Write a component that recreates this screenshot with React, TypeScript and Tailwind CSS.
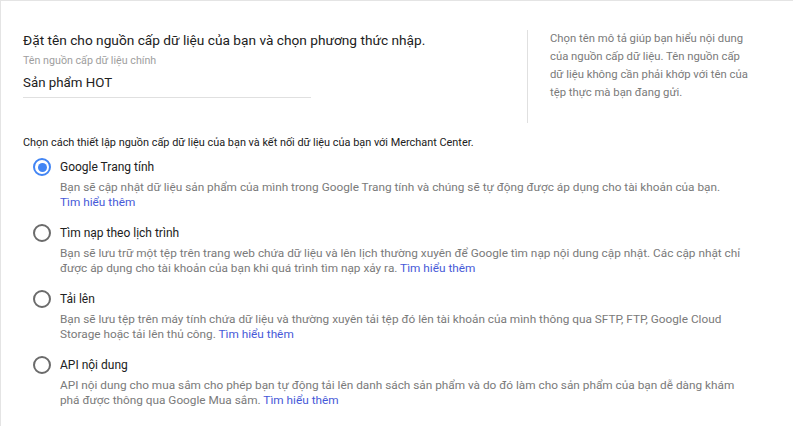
import React from "react";

const Radio = ({ checked }: { checked?: boolean }) => (
  <div
    className={
      "w-[18px] h-[18px] rounded-full border-2 flex items-center justify-center shrink-0 " +
      (checked ? "border-[#4285f4]" : "border-[#6b6b6b]")
    }
  >
    {checked && <div className="w-[9px] h-[9px] rounded-full bg-[#4285f4]" />}
  </div>
);

const Link = () => <span className="text-[#4659d8]">Tìm hiểu thêm</span>;

const Option = ({
  checked,
  title,
  children,
}: {
  checked?: boolean;
  title: string;
  children: React.ReactNode;
}) => (
  <div className="flex flex-col mb-[13px]">
    <div className="flex items-center h-[20px] gap-[9px] pl-[32px]">
      <Radio checked={checked} />
      <span className="text-[12px] text-[#212121] leading-[20px]">{title}</span>
    </div>
    <div className="mt-[3px] ml-[59px] w-[692px] text-[11.8px] leading-[15px] text-[#7a7a7a]">
      {children}
    </div>
  </div>
);

export default function App() {
  return (
    <div
      className="w-[793px] h-[426px] bg-white border-t border-l border-[#e4e4e4] overflow-hidden"
      style={{ fontFamily: "Roboto, 'Noto Sans', sans-serif" }}
    >
      <div className="flex pt-[29px] pl-[22px]">
        <div className="w-[504px] shrink-0">
          <div className="text-[13.7px] leading-[20px] text-[#212121]">
            Đặt tên cho nguồn cấp dữ liệu của bạn và chọn phương thức nhập.
          </div>
          <div className="mt-[4px] text-[10.7px] leading-[14px] text-[#9e9e9e]">
            Tên nguồn cấp dữ liệu chính
          </div>
          <div className="mt-[5px] w-[288px] border-b border-[#e0e0e0] pb-[4px] text-[13.3px] leading-[20px] text-[#212121]">
            Sản phẩm HOT
          </div>
        </div>
        <div className="w-px h-[93px] bg-[#e0e0e0] shrink-0" />
        <div className="pl-[22px] w-[240px] text-[11.3px] leading-[18px] text-[#7a7a7a] whitespace-nowrap">
          Chọn tên mô tả giúp bạn hiểu nội dung
          <br />
          của nguồn cấp dữ liệu. Tên nguồn cấp
          <br />
          dữ liệu không cần phải khớp với tên của
          <br />
          tệp thực mà bạn đang gửi.
        </div>
      </div>
      <div className="pl-[22px] mt-[13px] text-[10.9px] leading-[14px] text-[#212121]">
        Chọn cách thiết lập nguồn cấp dữ liệu của bạn và kết nối dữ liệu của bạn với Merchant Center.
      </div>
      <div className="mt-[7px] flex flex-col">
        <Option checked title="Google Trang tính">
          Bạn sẽ cập nhật dữ liệu sản phẩm của mình trong Google Trang tính và chúng sẽ tự động được áp dụng cho tài khoản của bạn.
          <br />
          <Link />
        </Option>
        <Option title="Tìm nạp theo lịch trình">
          Bạn sẽ lưu trữ một tệp trên trang web chứa dữ liệu và lên lịch thường xuyên để Google tìm nạp nội dung cập nhật. Các cập nhật chỉ được áp dụng cho tài khoản của bạn khi quá trình tìm nạp xảy ra. <Link />
        </Option>
        <Option title="Tải lên">
          Bạn sẽ lưu tệp trên máy tính chứa dữ liệu và thường xuyên tải tệp đó lên tài khoản của mình thông qua SFTP, FTP, Google Cloud Storage hoặc tải lên thủ công. <Link />
        </Option>
        <Option title="API nội dung">
          API nội dung cho mua sắm cho phép bạn tự động tải lên danh sách sản phẩm và do đó làm cho sản phẩm của bạn dễ dàng khám phá được thông qua Google Mua sắm. <Link />
        </Option>
      </div>
    </div>
  );
}
